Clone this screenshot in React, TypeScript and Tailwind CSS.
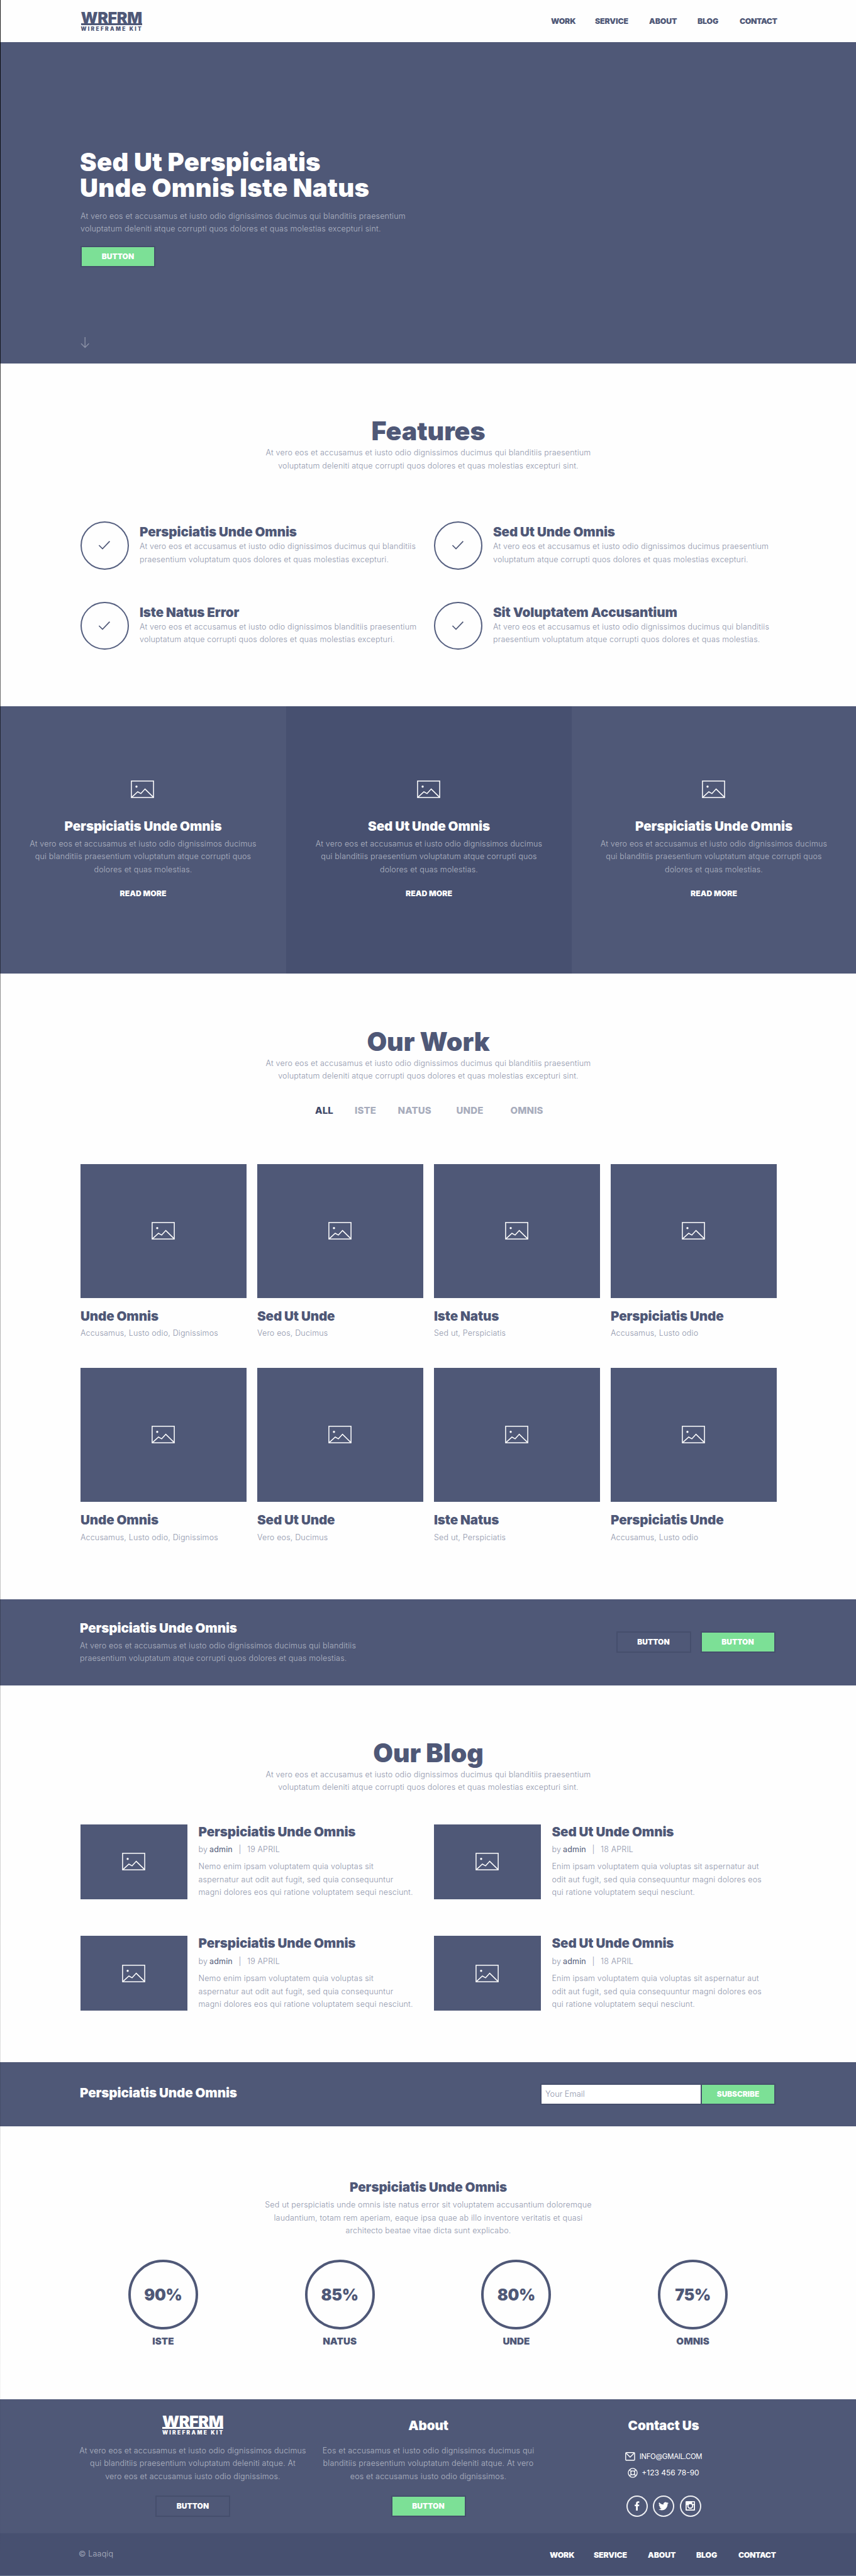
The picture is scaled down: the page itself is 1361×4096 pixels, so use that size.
import type { ReactNode } from "react";

const BODY = "text-[12.5px] leading-[20.4px] font-light tracking-[0.18px] whitespace-nowrap";
const H2 = "text-[41px] leading-[46px] mb-[2px] font-black tracking-[-0.05px] text-[#4f5877] whitespace-nowrap";
const H3 = "text-[20.6px] leading-[26px] font-black tracking-[-0.12px] whitespace-nowrap";

function Lines({ lines, dark = false }: { lines: string[]; dark?: boolean }) {
  return (
    <p className={`${BODY} ${dark ? "text-[#b1b6c3]" : "text-[#9096ac]"}`}>
      {lines.map((line) => (
        <span key={line} className="block">
          {line}
        </span>
      ))}
    </p>
  );
}

function Logo() {
  return (
    <div className="w-[97px]">
      <div className="h-[18px] text-[25px] leading-[18px] font-black tracking-[-0.35px] whitespace-nowrap">WRFRM</div>
      <div className="h-[3px] bg-current" />
      <div className="mt-[3.4px] h-[6px] text-[8.4px] leading-[6px] font-black tracking-[2.3px] whitespace-nowrap">
        WIREFRAME KIT
      </div>
    </div>
  );
}

function ImageIcon() {
  return (
    <svg
      className="relative -left-px"
      width="37"
      height="28"
      viewBox="0 0 37 28"
      fill="none"
      stroke="#fff"
      strokeWidth="1.5"
    >
      <rect x="0.9" y="0.9" width="35.2" height="26.2" />
      <circle cx="9" cy="9.8" r="1.7" fill="#fff" stroke="none" />
      <path d="M1.5 26.6 L11 18 L16 20.8 L22.6 13.6 L35.6 26.4" />
    </svg>
  );
}

function Button({ children, green = false }: { children: ReactNode; green?: boolean }) {
  return (
    <div
      className={`flex h-[34px] w-[119px] items-center justify-center border-2 border-[#454e6c] text-[12px] leading-4 font-black text-white ${
        green ? "bg-[#7ce096]" : ""
      }`}
    >
      {children}
    </div>
  );
}

function Nav() {
  return (
    <nav className="flex text-[12.3px] leading-4 font-black tracking-[-0.1px] whitespace-nowrap">
      <a className="w-[70px]">WORK</a>
      <a className="w-[86px]">SERVICE</a>
      <a className="w-[77px]">ABOUT</a>
      <a className="w-[67px]">BLOG</a>
      <a className="w-[60px] tracking-[-0.4px]">CONTACT</a>
    </nav>
  );
}

const INTRO = [
  "At vero eos et accusamus et iusto odio dignissimos ducimus qui blanditiis praesentium",
  "voluptatum deleniti atque corrupti quos dolores et quas molestias excepturi sint.",
];

const FEATURES = [
  {
    title: "Perspiciatis Unde Omnis",
    lines: [
      "At vero eos et accusamus et iusto odio dignissimos ducimus qui blanditiis",
      "praesentium voluptatum quos dolores et quas molestias excepturi.",
    ],
  },
  {
    title: "Sed Ut Unde Omnis",
    lines: [
      "At vero eos et accusamus et iusto odio dignissimos ducimus praesentium",
      "voluptatum atque corrupti quos dolores et quas molestias excepturi.",
    ],
  },
  {
    title: "Iste Natus Error",
    lines: [
      "At vero eos et accusamus et iusto odio dignissimos blanditiis praesentium",
      "voluptatum atque corrupti quos dolores et quas molestias excepturi.",
    ],
  },
  {
    title: "Sit Voluptatem Accusantium",
    lines: [
      "At vero eos et accusamus et iusto odio dignissimos ducimus qui blanditiis",
      "praesentium voluptatum atque corrupti quos dolores et quas molestias.",
    ],
  },
];

const PANELS = ["Perspiciatis Unde Omnis", "Sed Ut Unde Omnis", "Perspiciatis Unde Omnis"];

const WORKS = [
  ["Unde Omnis", "Accusamus, Lusto odio, Dignissimos"],
  ["Sed Ut Unde", "Vero eos, Ducimus"],
  ["Iste Natus", "Sed ut, Perspiciatis"],
  ["Perspiciatis Unde", "Accusamus, Lusto odio"],
];

const POSTS = [
  {
    title: "Perspiciatis Unde Omnis",
    date: "19 APRIL",
    lines: [
      "Nemo enim ipsam voluptatem quia voluptas sit",
      "aspernatur aut odit aut fugit, sed quia consequuntur",
      "magni dolores eos qui ratione voluptatem sequi nesciunt.",
    ],
  },
  {
    title: "Sed Ut Unde Omnis",
    date: "18 APRIL",
    lines: [
      "Enim ipsam voluptatem quia voluptas sit aspernatur aut",
      "odit aut fugit, sed quia consequuntur magni dolores eos",
      "qui ratione voluptatem sequi nesciunt.",
    ],
  },
];

const STATS = [
  ["90%", "ISTE"],
  ["85%", "NATUS"],
  ["80%", "UNDE"],
  ["75%", "OMNIS"],
];

export default function App() {
  return (
    <div className="relative h-[4096px] w-[1361px] overflow-hidden bg-[#fefefe] font-['Inter',sans-serif] text-[#4f5877]">
      <div className="absolute top-0 left-0 z-10 h-full w-px bg-linear-to-b from-black/90 via-black/30 to-black/0" />

      <header className="flex h-[67px] justify-between pr-[125px] pl-[128.5px]">
        <div className="pt-[18.7px]">
          <Logo />
        </div>
        <div className="pt-[26px]">
          <Nav />
        </div>
      </header>

      <section className="h-[511px] bg-[#4f5877] pt-[170px] pl-[127px]">
        <h1 className="text-[40px] leading-[41px] font-black tracking-[0.3px] text-white">
          Sed Ut Perspiciatis
          <br />
          Unde Omnis Iste Natus
        </h1>
        <div className="mt-[14.5px] ml-px">
          <Lines lines={INTRO} dark />
        </div>
        <div className="mt-[16.4px] ml-px">
          <Button green>BUTTON</Button>
        </div>
        <svg className="mt-[111px] ml-px" width="15" height="18" viewBox="0 0 15 18" fill="none" stroke="#8b91a6" strokeWidth="1.4">
          <path d="M7.2 0 V16.5 M1 10.2 L7.2 16.6 L13.4 10.2" />
        </svg>
      </section>

      <section className="h-[545px] pt-[84.3px]">
        <div className="w-[1362px] text-center">
          <h2 className={H2}>Features</h2>
          <Lines lines={INTRO} />
        </div>
        <div className="mt-[78px] ml-[128px] grid grid-cols-[562px_562px] gap-y-[51px]">
          {FEATURES.map((f) => (
            <div key={f.title} className="flex h-[76.5px]">
              <div className="flex size-[76.5px] shrink-0 items-center justify-center rounded-full border-2 border-[#566080]">
                <svg width="20" height="16" viewBox="0 0 20 16" fill="none" stroke="#4f5877" strokeWidth="1.7">
                  <path d="M1.4 8 L7 13.6 L18.4 1.6" />
                </svg>
              </div>
              <div className="ml-[17.5px] pt-1">
                <h3 className={H3}>{f.title}</h3>
                <Lines lines={f.lines} />
              </div>
            </div>
          ))}
        </div>
      </section>

      <section className="grid h-[425.3px] grid-cols-[455px_454px_452px] text-white">
        {PANELS.map((title, i) => (
          <div
            key={i}
            className={`flex flex-col items-center pt-[118px] text-center ${i === 1 ? "bg-[#475070]" : "bg-[#4f5877]"}`}
          >
            <ImageIcon />
            <h3 className={`mt-[32px] ${H3}`}>{title}</h3>
            <div className="mt-[4.7px]">
              <Lines
                dark
                lines={[
                  "At vero eos et accusamus et iusto odio dignissimos ducimus",
                  "qui blanditiis praesentium voluptatum atque corrupti quos",
                  "dolores et quas molestias.",
                ]}
              />
            </div>
            <a className="mt-[20px] text-[12.2px] leading-4 font-black tracking-[0.1px]">READ MORE</a>
          </div>
        ))}
      </section>

      <section className="h-[995px] pt-[84.4px]">
        <div className="w-[1362px] text-center">
          <h2 className={H2}>Our Work</h2>
          <Lines lines={INTRO} />
        </div>
        <div className="mt-[34.5px] ml-[501px] flex text-[15px] leading-5 font-extrabold tracking-[0.15px] whitespace-nowrap text-[#a7acbc]">
          <span className="w-[63px] text-[#3f4867]">ALL</span>
          <span className="w-[68.5px]">ISTE</span>
          <span className="w-[93px]">NATUS</span>
          <span className="w-[86px]">UNDE</span>
          <span>OMNIS</span>
        </div>
        <div className="mt-[74.5px] ml-[128px] grid grid-cols-[264px_264px_264px_264px] gap-x-[17px] gap-y-[43.7px]">
          {[...WORKS, ...WORKS].map(([title, sub], i) => (
            <div key={i}>
              <div className="flex h-[213px] items-center justify-center bg-[#4f5877]">
                <ImageIcon />
              </div>
              <h3 className={`mt-[16.8px] ${H3}`}>{title}</h3>
              <div className="mt-[4.2px] -tracking-[0.1px]">
                <Lines lines={[sub]} />
              </div>
            </div>
          ))}
        </div>
      </section>

      <section className="flex h-[136.5px] justify-between bg-[#4f5877] pr-[128.5px] pl-[127px]">
        <div className="pt-[32.5px]">
          <h3 className={`text-white ${H3}`}>Perspiciatis Unde Omnis</h3>
          <div className="mt-[5px]">
            <Lines
              dark
              lines={[
                "At vero eos et accusamus et iusto odio dignissimos ducimus qui blanditiis",
                "praesentium voluptatum atque corrupti quos dolores et quas molestias.",
              ]}
            />
          </div>
        </div>
        <div className="flex gap-[15px] pt-[51px]">
          <Button>BUTTON</Button>
          <Button green>BUTTON</Button>
        </div>
      </section>

      <section className="h-[599px] pt-[83.8px]">
        <div className="w-[1362px] text-center">
          <h2 className={H2}>Our Blog</h2>
          <Lines lines={INTRO} />
        </div>
        <div className="mt-[48.2px] ml-[128px] grid grid-cols-[562px_562px] gap-y-[58.8px]">
          {[...POSTS, ...POSTS].map((p, i) => (
            <div key={i} className="flex h-[119px]">
              <div className="flex w-[170px] shrink-0 items-center justify-center bg-[#4f5877]">
                <ImageIcon />
              </div>
              <div className="ml-[17.5px]">
                <h3 className={`-mt-px mb-px ${H3}`}>{p.title}</h3>
                <div className={`mt-[5.4px] flex text-[#9096ac] ${BODY}`}>
                  <span className="w-[17.5px]">by</span>
                  <span className="font-normal text-[#4f5877]">admin</span>
                  <span className="mx-[9.5px]">|</span>
                  <span>{p.date}</span>
                </div>
                <div className="mt-[7px]">
                  <Lines lines={p.lines} />
                </div>
              </div>
            </div>
          ))}
        </div>
      </section>

      <section className="flex h-[102px] justify-between bg-[#4f5877] pr-[128px] pl-[127px]">
        <h3 className={`pt-[36px] text-white ${H3}`}>Perspiciatis Unde Omnis</h3>
        <div className="mt-[34.5px] flex h-[33.5px] border-2 border-[#454e6c]">
          <div className="w-[255px] border-r-2 border-[#454e6c] bg-white pl-[6px] text-[12.8px] leading-[30px] font-light text-[#9096ac]">
            Your Email
          </div>
          <div className="flex w-[115px] items-center justify-center bg-[#7ce096] text-[11.8px] leading-4 font-black text-white">
            SUBSCRIBE
          </div>
        </div>
      </section>

      <section className="h-[434.2px] pt-[84.4px]">
        <div className="w-[1362px] text-center">
          <h3 className={H3}>Perspiciatis Unde Omnis</h3>
          <div className="mt-[5px]">
            <Lines
              lines={[
                "Sed ut perspiciatis unde omnis iste natus error sit voluptatem accusantium doloremque",
                "laudantium, totam rem aperiam, eaque ipsa quae ab illo inventore veritatis et quasi",
                "architecto beatae vitae dicta sunt explicabo.",
              ]}
            />
          </div>
        </div>
        <div className="mt-9 ml-[119px] grid w-[1123px] grid-cols-4">
          {STATS.map(([value, label]) => (
            <div key={label} className="flex flex-col items-center">
              <div className="flex size-[111px] items-center justify-center rounded-full border-4 border-[#4f5877] pt-[2px] text-[25.2px] leading-none font-black tracking-[-0.3px]">
                {value}
              </div>
              <div className="mt-[8.7px] text-[15.2px] leading-5 font-black">{label}</div>
            </div>
          ))}
        </div>
      </section>

      <footer className="text-white">
        <div className="flex h-[212.7px] bg-[#4f5877] pl-[128px] text-center">
          <div className="flex w-[357px] flex-col items-center pt-[26px]">
            <div className="text-left">
              <Logo />
            </div>
            <div className="mt-[15.4px]">
              <Lines
                dark
                lines={[
                  "At vero eos et accusamus et iusto odio dignissimos ducimus",
                  "qui blanditiis praesentium voluptatum deleniti atque. At",
                  "vero eos et accusamus iusto odio dignissimos.",
                ]}
              />
            </div>
            <div className="mt-5">
              <Button>BUTTON</Button>
            </div>
          </div>
          <div className="ml-[17.5px] flex w-[357px] flex-col items-center pt-[29px]">
            <h3 className={H3}>About</h3>
            <div className="mt-[16.8px]">
              <Lines
                dark
                lines={[
                  "Eos et accusamus et iusto odio dignissimos ducimus qui",
                  "blanditiis praesentium voluptatum deleniti atque. At vero",
                  "eos et accusamus iusto odio dignissimos.",
                ]}
              />
            </div>
            <div className="mt-5">
              <Button green>BUTTON</Button>
            </div>
          </div>
          <div className="ml-[17px] flex w-[357px] flex-col items-center pt-[29px]">
            <h3 className={H3}>Contact Us</h3>
            <div className="mt-[28.5px] flex h-4 items-center gap-[7px] text-[11.3px] leading-4 whitespace-nowrap">
              <svg width="16" height="14" viewBox="0 0 16 14" fill="none" stroke="#fff" strokeWidth="1.4">
                <rect x="0.8" y="0.8" width="14.2" height="12.2" rx="1.2" />
                <path d="M1.4 1.6 L7.9 8 L14.4 1.6" />
              </svg>
              <span className="tracking-[-0.28px]">INFO@GMAIL.COM</span>
            </div>
            <div className="mt-[9.5px] flex h-4 items-center gap-[6px] text-[12px] leading-4 whitespace-nowrap">
              <svg width="16" height="16" viewBox="0 0 16 16" fill="none" stroke="#fff" strokeWidth="1.3">
                <circle cx="8" cy="8" r="7.1" />
                <circle cx="8" cy="8" r="3.1" />
                <path
                  d="M3.4 2.4 L6.2 5.3 M2.4 3.4 L5.3 6.2 M12.6 2.4 L9.8 5.3 M13.6 3.4 L10.7 6.2 M3.4 13.6 L6.2 10.7 M2.4 12.6 L5.3 9.8 M12.6 13.6 L9.8 10.7 M13.6 12.6 L10.7 9.8"
                  strokeWidth="1"
                />
              </svg>
              <span>+123 456 78-90</span>
            </div>
            <div className="mt-[28px] flex gap-[8.5px]">
              <div className="flex size-[34px] items-center justify-center rounded-full border-2 border-white/90">
                <svg width="8" height="15" viewBox="0 0 8 15" fill="#fff">
                  <path d="M2.2 15 V8 H0.2 V5.4 H2.2 V3.7 C2.2 1.4 3.4 0.2 5.4 0.2 H7.4 V2.8 H6.1 C5.2 2.8 5 3.2 5 4 V5.4 H7.4 L7.1 8 H5 V15 Z" />
                </svg>
              </div>
              <div className="flex size-[34px] items-center justify-center rounded-full border-2 border-white/90">
                <svg width="16" height="16" viewBox="0 0 24 24" fill="#fff">
                  <path d="M23.95 4.57a10 10 0 0 1-2.82.77 4.96 4.96 0 0 0 2.16-2.72c-.95.55-2 .95-3.13 1.18a4.92 4.92 0 0 0-8.38 4.48C7.69 8.1 4.07 6.13 1.64 3.16a4.92 4.92 0 0 0 1.52 6.57 4.9 4.9 0 0 1-2.23-.61v.06a4.92 4.92 0 0 0 3.95 4.83 5 5 0 0 1-2.21.08 4.94 4.94 0 0 0 4.6 3.42A9.87 9.87 0 0 1 0 19.54a13.99 13.99 0 0 0 7.55 2.21c9.05 0 14-7.5 14-13.98 0-.21 0-.42-.02-.63a9.94 9.94 0 0 0 2.46-2.55z" />
                </svg>
              </div>
              <div className="flex size-[34px] items-center justify-center rounded-full border-2 border-white/90">
                <svg width="15" height="15" viewBox="0 0 15 15" fill="none">
                  <path
                    fill="#fff"
                    fillRule="evenodd"
                    d="M1.2 0 H13.8 Q15 0 15 1.2 V13.8 Q15 15 13.8 15 H1.2 Q0 15 0 13.8 V1.2 Q0 0 1.2 0 Z M10.6 1.6 V4.4 H13.4 V1.6 Z M1.8 6.2 V13.2 H13.2 V6.2 H11.9 A4.6 4.6 0 1 1 3.1 6.2 Z"
                  />
                  <circle cx="7.5" cy="7.5" r="3.7" stroke="#fff" strokeWidth="1.7" fill="#4f5877" />
                </svg>
              </div>
            </div>
          </div>
        </div>
        <div className="flex h-[68.3px] justify-between border-b border-[#6b7890] bg-[#475070] pr-[127px] pl-[125px]">
          <div className={`pt-[23.5px] text-[#b1b6c3] ${BODY}`}>© Laaqiq</div>
          <div className="pt-[27px]">
            <Nav />
          </div>
        </div>
      </footer>
    </div>
  );
}
